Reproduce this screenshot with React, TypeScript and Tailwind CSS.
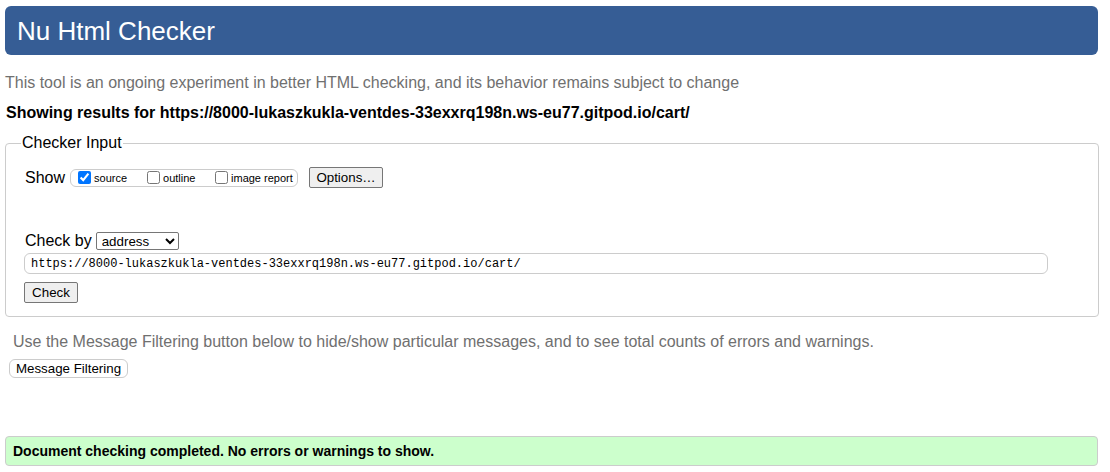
import React from "react";

const Checkbox = ({ label, checked }: { label: string; checked?: boolean }) => (
	<label className="flex items-center">
		<input type="checkbox" defaultChecked={checked} className="m-0 w-[13px] h-[13px]" />
		<span className="ml-[3px] mt-[2px] text-[11px] leading-none">{label}</span>
	</label>
);

export default function App() {
	return (
		<div className="w-[1110px] h-[472px] overflow-hidden bg-white text-black font-['Liberation_Sans',Arial,sans-serif]">
			<header className="ml-[5px] mr-[12px] mt-[6px] h-[49px] rounded-[6px] bg-[#365d95] pl-[12px] flex items-center">
				<h1 className="text-[26px] text-white leading-none">Nu Html Checker</h1>
			</header>

			<p className="mt-[19px] pl-[5px] text-[16px] leading-[18px] text-[#707070]">
				This tool is an ongoing experiment in better HTML checking, and its behavior remains subject to change
			</p>
			<p className="mt-[12px] pl-[6px] text-[16px] leading-[18px] font-bold">
				Showing results for https://8000-lukaszkukla-ventdes-33exxrq198n.ws-eu77.gitpod.io/cart/
			</p>

			<fieldset className="ml-[5px] mr-[12px] mt-[12px] h-[183px] border border-[#cccccc] rounded-[4px] pl-[19px] pr-[50px]">
				<legend className="-ml-[4px] px-[1px] text-[16px] leading-[18px]">Checker Input</legend>

				<div className="mt-[15px] flex items-center h-[21px]">
					<span className="text-[16px] leading-none">Show</span>
					<div className="ml-[5px] flex items-center h-[18px] w-[228px] border border-[#cccccc] rounded-[6px] pl-[7px] gap-0">
						<div className="w-[69px]">
							<Checkbox label="source" checked />
						</div>
						<div className="w-[68px]">
							<Checkbox label="outline" />
						</div>
						<Checkbox label="image report" />
					</div>
					<button className="ml-[11px] h-[21px] w-[74px] bg-[#efefef] border border-[#767676] rounded-[2px] text-[13.33px] leading-none">
						Options…
					</button>
				</div>

				<div className="mt-[43px] flex items-center h-[19px]">
					<span className="text-[16px] leading-none">Check by</span>
					<select
						defaultValue="address"
						className="ml-[4px] h-[18px] w-[83px] border border-[#767676] rounded-[2px] text-[13.33px] leading-none bg-white pl-[1px]"
					>
						<option value="address">address</option>
						<option value="file">file upload</option>
						<option value="text">text input</option>
					</select>
				</div>

				<input
					type="text"
					readOnly
					value="https://8000-lukaszkukla-ventdes-33exxrq198n.ws-eu77.gitpod.io/cart/"
					className="mt-[3px] -ml-px block w-[1024px] h-[21px] border border-[#cccccc] rounded-[6px] px-[6px] text-[12px] font-['Liberation_Mono',monospace] outline-none"
				/>

				<button className="mt-[8px] -ml-px block h-[21px] w-[54px] bg-[#efefef] border border-[#767676] rounded-[2px] text-[13.33px] leading-none">
					Check
				</button>
			</fieldset>

			<p className="mt-[16px] pl-[13px] text-[16px] leading-[18px] text-[#707070]">
				Use the Message Filtering button below to hide/show particular messages, and to see total counts of errors and warnings.
			</p>
			<button className="mt-[8px] ml-[9px] block h-[19px] w-[119px] bg-white border border-[#cccccc] rounded-[6px] text-[13.33px] leading-none">
				Message Filtering
			</button>

			<div className="mt-[58px] ml-[5px] mr-[12px] h-[30px] bg-[#ccffcc] border border-[#cccccc] rounded-[4px] pl-[7px] flex items-center">
				<p className="text-[14px] font-bold leading-none">
					Document checking completed. No errors or warnings to show.
				</p>
			</div>
		</div>
	);
}
